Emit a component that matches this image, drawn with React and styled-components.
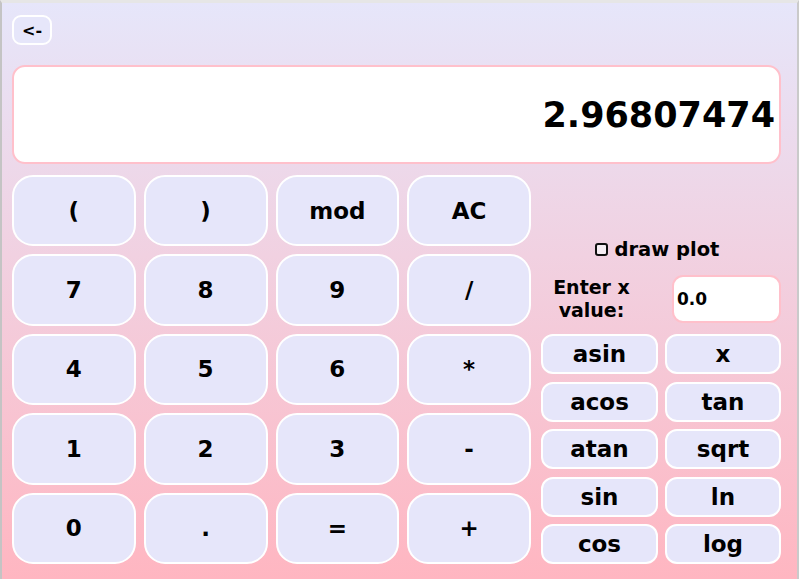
import React from "react";
import styled, { createGlobalStyle } from "styled-components";

const Global = createGlobalStyle`
  html, body { margin: 0; padding: 0; }
  body { width: 799px; height: 579px; overflow: hidden; background: #d4d4d4; }
  * { box-sizing: border-box; }
`;

const Frame = styled.div`
  width: 799px;
  height: 579px;
  border-top: 3px solid #e6e6e6;
  border-left: 2px solid #c4c4c4;
  border-right: 2px solid #cacaca;
  background: linear-gradient(to bottom, #e6e6fa 0%, #ffb6c1 100%);
  font-family: "DejaVu Sans", "Liberation Sans", sans-serif;
  font-weight: bold;
  color: #000;
  padding: 12px 0 0 10px;
  display: flex;
  flex-direction: column;
`;

const BackButton = styled.button`
  width: 40px;
  height: 30px;
  border: 2px solid #fff;
  border-radius: 9px;
  background: #e6e6fa;
  font-family: inherit;
  font-weight: bold;
  font-size: 16px;
  padding: 0;
  color: #000;
  display: flex;
  align-items: center;
  justify-content: center;
`;

const Display = styled.div`
  margin-top: 20px;
  width: 769px;
  height: 99px;
  border: 2px solid #ffc0cb;
  border-radius: 13px;
  background: #fff;
  display: flex;
  align-items: center;
  justify-content: flex-end;
  padding-right: 4px;
  font-size: 35px;
`;

const Body = styled.div`
  margin-top: 11px;
  display: flex;
  gap: 10px;
  width: 769px;
`;

const Keypad = styled.div`
  width: 519px;
  height: 389px;
  display: grid;
  grid-template-columns: repeat(4, 1fr);
  grid-template-rows: repeat(5, 1fr);
  gap: 8px;
`;

const Key = styled.button`
  border: 2px solid #fff;
  border-radius: 21px;
  background: #e6e6fa;
  font-family: inherit;
  font-weight: bold;
  font-size: 23px;
  color: #000;
  padding: 0;
`;

const Side = styled.div`
  width: 240px;
  height: 389px;
  display: flex;
  flex-direction: column;
  justify-content: flex-end;
`;

const PlotRow = styled.label`
  height: 24px;
  display: flex;
  align-items: center;
  justify-content: center;
  gap: 7px;
  font-size: 19.5px;
  padding-right: 8px;
`;

const Check = styled.input`
  appearance: none;
  margin: 0;
  width: 13px;
  height: 13px;
  border: 2px solid #111;
  border-radius: 3px;
  background: #f6eef4;
`;

const InputRow = styled.div`
  margin-top: 14px;
  height: 48px;
  display: flex;
  align-items: center;
  justify-content: space-between;
`;

const XLabel = styled.div`
  width: 101px;
  text-align: center;
  font-size: 19px;
  line-height: 23px;
`;

const XInput = styled.input`
  width: 109px;
  height: 48px;
  border: 2px solid #ffc0cb;
  border-radius: 11px;
  background: #fff;
  font-family: inherit;
  font-weight: bold;
  font-size: 17px;
  padding: 0 0 0 3px;
  color: #000;
  outline: none;
`;

const SciGrid = styled.div`
  margin-top: 11px;
  display: grid;
  grid-template-columns: 117px 116px;
  grid-auto-rows: 40px;
  column-gap: 7px;
  row-gap: 7.5px;
`;

const SciKey = styled.button`
  border: 2px solid #fff;
  border-radius: 12px;
  background: #e6e6fa;
  font-family: inherit;
  font-weight: bold;
  font-size: 23px;
  color: #000;
  padding: 0;
`;

const keys = ["(", ")", "mod", "AC", "7", "8", "9", "/", "4", "5", "6", "*", "1", "2", "3", "-", "0", ".", "=", "+"];
const sci = ["asin", "x", "acos", "tan", "atan", "sqrt", "sin", "ln", "cos", "log"];

export default function App() {
  return (
    <>
      <Global />
      <Frame>
        <BackButton>&lt;-</BackButton>
        <Display>2.96807474</Display>
        <Body>
          <Keypad>
            {keys.map((k) => (
              <Key key={k}>{k}</Key>
            ))}
          </Keypad>
          <Side>
            <PlotRow>
              <Check type="checkbox" />
              draw plot
            </PlotRow>
            <InputRow>
              <XLabel>Enter x value:</XLabel>
              <XInput defaultValue="0.0" />
            </InputRow>
            <SciGrid>
              {sci.map((k) => (
                <SciKey key={k}>{k}</SciKey>
              ))}
            </SciGrid>
          </Side>
        </Body>
      </Frame>
    </>
  );
}
